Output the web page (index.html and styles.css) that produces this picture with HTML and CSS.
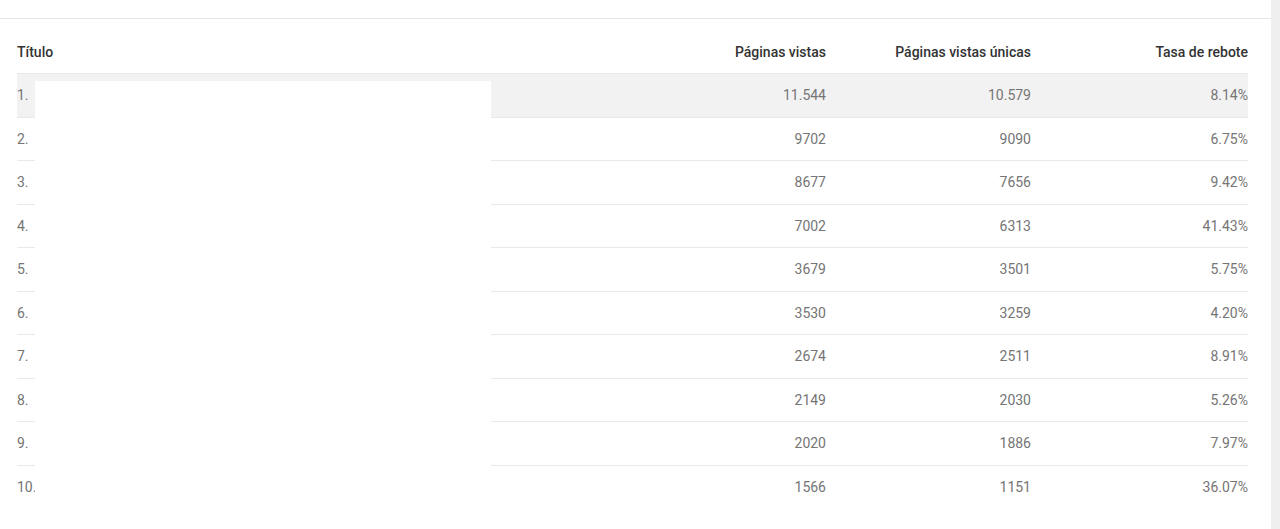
FILE: index.html
```html
<!DOCTYPE html>
<html lang="es">
<head>
<meta charset="utf-8">
<title>Páginas</title>
<link rel="stylesheet" href="styles.css">
</head>
<body>
<div class="panel">
  <div class="topbar"></div>
  <div class="report">
    <div class="row head">
      <div class="c title">Título</div>
      <div class="c num">Páginas vistas</div>
      <div class="c num">Páginas vistas únicas</div>
      <div class="c num">Tasa de rebote</div>
    </div>
    <div class="row data hl"><div class="c title">1.</div><div class="c num">11.544</div><div class="c num">10.579</div><div class="c num">8.14%</div></div>
    <div class="row data"><div class="c title">2.</div><div class="c num">9702</div><div class="c num">9090</div><div class="c num">6.75%</div></div>
    <div class="row data"><div class="c title">3.</div><div class="c num">8677</div><div class="c num">7656</div><div class="c num">9.42%</div></div>
    <div class="row data"><div class="c title">4.</div><div class="c num">7002</div><div class="c num">6313</div><div class="c num">41.43%</div></div>
    <div class="row data"><div class="c title">5.</div><div class="c num">3679</div><div class="c num">3501</div><div class="c num">5.75%</div></div>
    <div class="row data"><div class="c title">6.</div><div class="c num">3530</div><div class="c num">3259</div><div class="c num">4.20%</div></div>
    <div class="row data"><div class="c title">7.</div><div class="c num">2674</div><div class="c num">2511</div><div class="c num">8.91%</div></div>
    <div class="row data"><div class="c title">8.</div><div class="c num">2149</div><div class="c num">2030</div><div class="c num">5.26%</div></div>
    <div class="row data"><div class="c title">9.</div><div class="c num">2020</div><div class="c num">1886</div><div class="c num">7.97%</div></div>
    <div class="row data last"><div class="c title">10.</div><div class="c num">1566</div><div class="c num">1151</div><div class="c num">36.07%</div></div>
    <div class="redact"></div>
  </div>
</div>
</body>
</html>
```

FILE: styles.css
```css
html, body {
  margin: 0;
  padding: 0;
}
body {
  background: #efefef;
  font-family: Roboto, "Liberation Sans", Arial, sans-serif;
  font-size: 14px;
  height: 529px;
  overflow: hidden;
}
.panel {
  width: 1271px;
  height: 529px;
  background: #ffffff;
}
.topbar {
  height: 18px;
  border-bottom: 1px solid #e6e6e6;
}
.report {
  position: relative;
  margin: 11px 23px 0 17px;
}
.row {
  display: grid;
  grid-template-columns: 1fr 200px 205px 217px;
  align-items: center;
  box-sizing: border-box;
}
.head {
  height: 44px;
  color: #333333;
  font-weight: 500;
  border-bottom: 1px solid #e9e9e9;
}
.data {
  height: 43.5px;
  color: #757575;
  border-bottom: 1px solid #e9e9e9;
}
.data.last {
  border-bottom: none;
}
.hl {
  background: #f2f2f2;
}
.num {
  text-align: right;
}
.redact {
  position: absolute;
  left: 18px;
  top: 51px;
  width: 456px;
  height: 440px;
  background: #ffffff;
}
```
